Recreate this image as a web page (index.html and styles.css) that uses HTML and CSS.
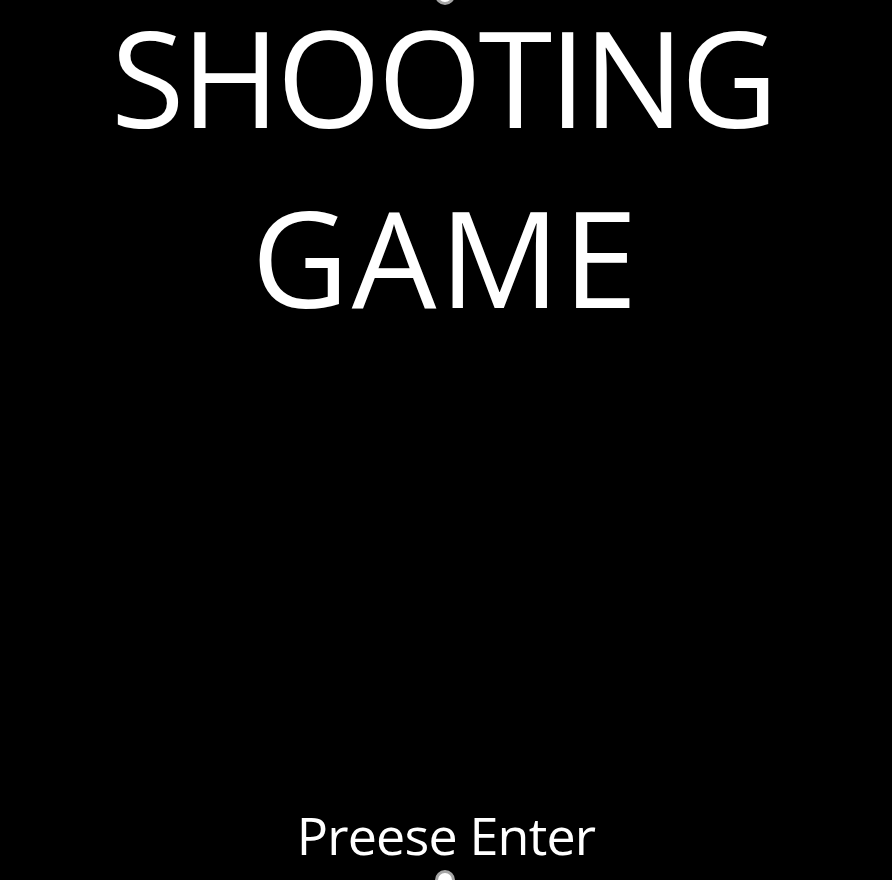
FILE: index.html
```html
<!DOCTYPE html>
<html>
<head>
<meta charset="utf-8">
<link rel="stylesheet" href="styles.css">
</head>
<body>
<div class="slide">
  <h1 class="title">
    <span class="title-line title-line-1">SHOOTING</span>
    <span class="title-line title-line-2">GAME</span>
  </h1>
  <p class="prompt">Preese Enter</p>
  <span class="handle handle-top"></span>
  <span class="handle handle-bottom"></span>
</div>
</body>
</html>
```

FILE: styles.css
```css
html, body {
  margin: 0;
  padding: 0;
  background: #000;
}
.slide {
  position: relative;
  width: 892px;
  height: 880px;
  overflow: hidden;
  display: flex;
  flex-direction: column;
  align-items: center;
  color: #fff;
  font-family: "Open Sans", "Noto Sans", sans-serif;
}
.title {
  margin: 0;
  display: flex;
  flex-direction: column;
  align-items: center;
  gap: 28px;
  font-size: 134px;
  font-weight: 400;
  line-height: 152px;
}
.title-line {
  display: block;
  white-space: nowrap;
}
.title-line-1 {
  letter-spacing: -3.3px;
  margin-right: 6px;
}
.title-line-2 {
  letter-spacing: 3px;
  margin-right: -3px;
  margin-left: -3px;
}
.prompt {
  margin: auto 0 15px 0;
  font-size: 52px;
  line-height: 60px;
  letter-spacing: -0.8px;
}
.handle {
  position: absolute;
  left: 435px;
  width: 14px;
  height: 14px;
  border-radius: 50%;
  border: 3px solid #a6a6a6;
  background: #fff;
}
.handle-top {
  top: -15px;
}
.handle-bottom {
  top: 870px;
}
```
